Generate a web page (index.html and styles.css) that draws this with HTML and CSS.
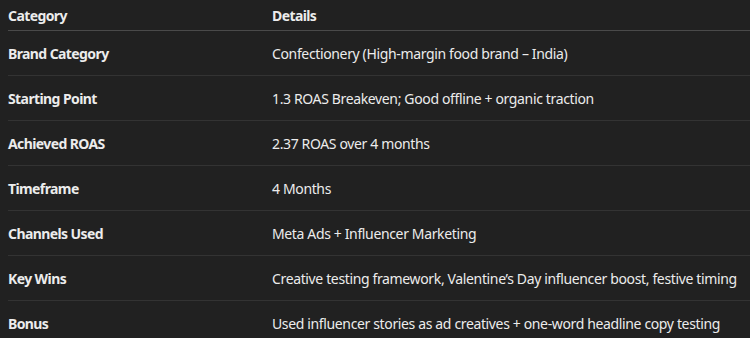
FILE: index.html
```html
<!DOCTYPE html>
<html lang="en">
<head>
<meta charset="utf-8">
<link rel="stylesheet" href="styles.css">
</head>
<body>
<table class="data">
  <thead>
    <tr><th>Category</th><th>Details</th></tr>
  </thead>
  <tbody>
    <tr><td class="label">Brand Category</td><td>Confectionery (High-margin food brand – India)</td></tr>
    <tr><td class="label">Starting Point</td><td>1.3 ROAS Breakeven; Good offline + organic traction</td></tr>
    <tr><td class="label">Achieved ROAS</td><td>2.37 ROAS over 4 months</td></tr>
    <tr><td class="label">Timeframe</td><td>4 Months</td></tr>
    <tr><td class="label">Channels Used</td><td>Meta Ads + Influencer Marketing</td></tr>
    <tr><td class="label">Key Wins</td><td>Creative testing framework, Valentine’s Day influencer boost, festive timing</td></tr>
    <tr><td class="label">Bonus</td><td>Used influencer stories as ad creatives + one-word headline copy testing</td></tr>
  </tbody>
</table>
</body>
</html>
```
FILE: styles.css
```css
html, body {
  margin: 0;
  background: #212121;
}
body {
  padding: 0 0 0 8px;
  font-family: "Noto Sans", "Open Sans", sans-serif;
  font-size: 14px;
  color: #ececec;
}
.data {
  width: 100%;
  border-collapse: collapse;
}
.data th, .data td {
  text-align: left;
  padding: 0;
  vertical-align: middle;
  white-space: nowrap;
  letter-spacing: -0.36px;
}
.data th {
  font-weight: 700;
  height: 30px;
  letter-spacing: -0.6px;
  border-bottom: 1px solid #4a4a4a;
}
.data td {
  height: 44px;
  border-bottom: 1px solid #333333;
}
.data th:first-child, .data td:first-child {
  width: 264px;
}
.data td.label {
  font-weight: 700;
  letter-spacing: -0.6px;
}
```
